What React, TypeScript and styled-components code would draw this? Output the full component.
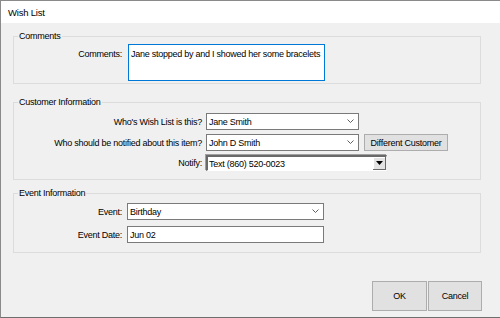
import React from "react";
import styled, { createGlobalStyle } from "styled-components";

const Global = createGlobalStyle`
  html, body { margin: 0; padding: 0; background: #f0f0f0; }
  body { font-family: "Liberation Sans", Arial, sans-serif; font-size: 9px; letter-spacing: -0.25px; color: #000; }
  * { box-sizing: border-box; }
`;

const Frame = styled.div`
  width: 500px;
  height: 318px;
  display: flex;
  flex-direction: column;
  border-top: 1px solid #8a8a8a;
  border-left: 1px solid #8a8a8a;
  border-bottom: 1px solid #6e6e6e;
  background: #f0f0f0;
  overflow: hidden;
`;

const TitleBar = styled.div`
  height: 22px;
  flex: none;
  background: #fff;
  display: flex;
  align-items: center;
  padding-left: 7px;
  font-size: 9.5px;
  letter-spacing: -0.2px;
  color: #000;
`;

const Body = styled.div`
  flex: 1;
  display: flex;
  flex-direction: column;
  padding: 13px 18px 6px 12px;
`;

const Group = styled.div<{ $mt?: number; $pt: number; $pb: number; $gap: number }>`
  position: relative;
  margin-top: ${(p) => p.$mt ?? 0}px;
  margin-right: 1px;
  border: 1px solid #dcdcdc;
  padding: ${(p) => p.$pt}px 0 ${(p) => p.$pb}px 0;
  display: flex;
  flex-direction: column;
  gap: ${(p) => p.$gap}px;
`;

const Caption = styled.span`
  position: absolute;
  left: 4px;
  top: -7px;
  line-height: 13px;
  padding: 0 1px;
  background: #f0f0f0;
`;

const Row = styled.div<{ $h: number; $top?: boolean }>`
  display: flex;
  align-items: ${(p) => (p.$top ? "flex-start" : "center")};
  height: ${(p) => p.$h}px;
`;

const Label = styled.label<{ $w: number; $gap: number; $lh?: number }>`
  width: ${(p) => p.$w}px;
  margin-right: ${(p) => p.$gap}px;
  text-align: right;
  white-space: nowrap;
  flex: none;
  ${(p) => (p.$lh ? `line-height: ${p.$lh}px;` : "")}
`;

const TextArea = styled.div`
  width: 197px;
  height: 37px;
  background: #fff;
  border: 1px solid #0078d7;
  padding: 3px 2px;
  line-height: 13px;
  white-space: nowrap;
  overflow: hidden;
`;

const TextBox = styled.div<{ $w: number }>`
  width: ${(p) => p.$w}px;
  height: 17px;
  background: #fff;
  border: 1px solid #7a7a7a;
  padding: 0 2px;
  display: flex;
  align-items: center;
`;

const Combo = styled(TextBox)`
  justify-content: space-between;
  padding-right: 4px;
`;

const OldCombo = styled.div`
  width: 181px;
  height: 16px;
  background: #fff;
  border-top: 2px solid #696969;
  border-left: 2px solid #696969;
  border-right: 1px solid #f0f0f0;
  border-bottom: 1px solid #ffffff;
  box-shadow: -1px -1px 0 #a0a0a0;
  display: flex;
  align-items: center;
  justify-content: space-between;
  padding-left: 1px;
`;

const DropBtn = styled.div`
  width: 13px;
  height: 13px;
  background: #e3e3e3;
  border-right: 1px solid #696969;
  border-bottom: 1px solid #696969;
  box-shadow: inset 1px 1px 0 #fff;
  display: flex;
  align-items: center;
  justify-content: center;
`;

const Button = styled.button<{ $w: number; $h: number }>`
  width: ${(p) => p.$w}px;
  height: ${(p) => p.$h}px;
  background: #e1e1e1;
  border: 1px solid #adadad;
  font-family: "Liberation Sans", Arial, sans-serif;
  font-size: 9px;
  letter-spacing: -0.25px;
  color: #000;
  padding: 0;
  margin: 0;
  white-space: nowrap;
`;

const DiffButton = styled(Button)`
  margin-left: 5px;
`;

const Footer = styled.div`
  margin-top: auto;
  display: flex;
  justify-content: flex-end;
  gap: 1px;
`;

const Chevron = () => (
  <svg width="7" height="5" viewBox="0 0 7 5">
    <path d="M0.5 0.5 L3.5 3.5 L6.5 0.5" fill="none" stroke="#606060" strokeWidth="1" />
  </svg>
);

const Triangle = () => (
  <svg width="7" height="4" viewBox="0 0 7 4">
    <path d="M0 0 H7 L3.5 4 Z" fill="#000" />
  </svg>
);

export default function App() {
  return (
    <>
      <Global />
      <Frame>
        <TitleBar>Wish List</TitleBar>
        <Body>
          <Group $pt={7} $pb={2} $gap={0}>
            <Caption>Comments</Caption>
            <Row $h={37} $top>
              <Label $w={108} $gap={6} $lh={20}>
                Comments:
              </Label>
              <TextArea>Jane stopped by and I showed her some bracelets</TextArea>
            </Row>
          </Group>

          <Group $mt={18} $pt={10} $pb={8} $gap={4}>
            <Caption>Customer Information</Caption>
            <Row $h={17}>
              <Label $w={188} $gap={4}>Who's Wish List is this?</Label>
              <Combo $w={153}>
                <span>Jane Smith</span>
                <Chevron />
              </Combo>
            </Row>
            <Row $h={17}>
              <Label $w={188} $gap={4}>Who should be notified about this item?</Label>
              <Combo $w={153}>
                <span>John D Smith</span>
                <Chevron />
              </Combo>
              <DiffButton $w={84} $h={17}>Different Customer</DiffButton>
            </Row>
            <Row $h={16}>
              <Label $w={188} $gap={4}>Notify:</Label>
              <OldCombo>
                <span>Text (860) 520-0023</span>
                <DropBtn>
                  <Triangle />
                </DropBtn>
              </OldCombo>
            </Row>
          </Group>

          <Group $mt={13} $pt={9} $pb={9} $gap={6}>
            <Caption>Event Information</Caption>
            <Row $h={17}>
              <Label $w={108} $gap={5}>Event:</Label>
              <Combo $w={197}>
                <span>Birthday</span>
                <Chevron />
              </Combo>
            </Row>
            <Row $h={17}>
              <Label $w={108} $gap={5}>Event Date:</Label>
              <TextBox $w={197}>Jun 02</TextBox>
            </Row>
          </Group>

          <Footer>
            <Button $w={55} $h={30}>OK</Button>
            <Button $w={54} $h={30}>Cancel</Button>
          </Footer>
        </Body>
      </Frame>
    </>
  );
}
